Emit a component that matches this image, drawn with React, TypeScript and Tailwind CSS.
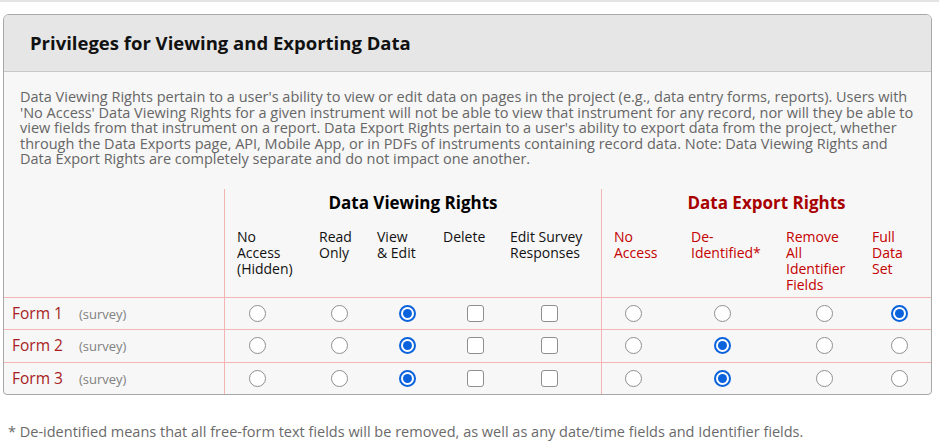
import React from "react";

type Col = { w: string; lab: string; pad: string; kind: "radio" | "box"; red?: boolean; first?: boolean; label: string[] };

const cols: Col[] = [
  { w: "86px", lab: "pl-[12px]", pad: "pl-[24px]", kind: "radio", first: true, label: ["No", "Access", "(Hidden)"] },
  { w: "60px", lab: "pl-[9px]", pad: "pl-[21px]", kind: "radio", label: ["Read", "Only"] },
  { w: "68px", lab: "pl-[7px]", pad: "pl-[29px]", kind: "radio", label: ["View", "& Edit"] },
  { w: "67px", lab: "pl-[5px]", pad: "pl-[29px]", kind: "box", label: ["Delete"] },
  { w: "96px", lab: "pl-[5px]", pad: "pl-[36px]", kind: "box", label: ["Edit Survey", "Responses"] },
  { w: "79px", lab: "pl-[12px]", pad: "pl-[23px]", kind: "radio", red: true, first: true, label: ["No", "Access"] },
  { w: "98px", lab: "pl-[11px]", pad: "pl-[34px]", kind: "radio", red: true, label: ["De-", "Identified*"] },
  { w: "84px", lab: "pl-[8px]", pad: "pl-[38px]", kind: "radio", red: true, label: ["Remove", "All", "Identifier", "Fields"] },
  { w: "69px", lab: "pl-[10px]", pad: "pl-[29px]", kind: "radio", red: true, label: ["Full", "Data", "Set"] },
];

const rows = [
  { name: "Form 1", h: "h-[32px]", view: 2, exp: 8 },
  { name: "Form 2", h: "h-[33px]", view: 2, exp: 6 },
  { name: "Form 3", h: "h-[32px]", view: 2, exp: 6 },
];

const grid = "grid grid-cols-[220px_86px_60px_68px_67px_96px_79px_98px_84px_69px]";

const Radio = ({ on }: { on: boolean }) =>
  on ? (
    <span className="flex h-[17px] w-[17px] items-center justify-center rounded-full border-2 border-[#0a63dc] bg-white">
      <span className="h-[9px] w-[9px] rounded-full bg-[#0a63dc]" />
    </span>
  ) : (
    <span className="block h-[17px] w-[17px] rounded-full border border-[#8f8f8f] bg-white" />
  );

const Box = () => <span className="block h-[17px] w-[17px] rounded-[3px] border border-[#8f8f8f] bg-white" />;

export default function App() {
  return (
    <div className="h-[445px] w-[939px] overflow-hidden border-t-2 border-[#e4e4e4] bg-white font-['Open_Sans',sans-serif]">
      <div className="ml-[3px] mt-[12px] w-[929px] overflow-hidden rounded-t-[6px] rounded-b-[4px] border border-[#a8a8a8] bg-[#f7f7f7]">
        <div className="flex h-[57px] items-center border-b border-[#c8c8c8] bg-[#e6e6e6] pl-[26px]">
          <h2 className="text-[18.5px] font-bold text-[#111]">Privileges for Viewing and Exporting Data</h2>
        </div>

        <p className="whitespace-nowrap px-[16px] pt-[17px] text-[14.5px] leading-[15.6px] text-[#666]">
          Data Viewing Rights pertain to a user's ability to view or edit data on pages in the project (e.g., data entry forms, reports). Users with<br />
          'No Access' Data Viewing Rights for a given instrument will not be able to view that instrument for any record, nor will they be able to<br />
          view fields from that instrument on a report. Data Export Rights pertain to a user's ability to export data from the project, whether<br />
          through the Data Exports page, API, Mobile App, or in PDFs of instruments containing record data. Note: Data Viewing Rights and<br />
          Data Export Rights are completely separate and do not impact one another.
        </p>

        <div className={`${grid} mt-[22px]`}>
          <div className="row-span-2" />
          <div className="col-span-5 flex h-[28px] items-center justify-center border-l border-[#f5b4b4] text-[17px] font-bold text-black">
            Data Viewing Rights
          </div>
          <div className="col-span-4 flex h-[28px] items-center justify-center border-l border-[#f5b4b4] text-[17px] font-bold text-[#a80000]">
            Data Export Rights
          </div>
          {cols.map((c, i) => (
            <div
              key={i}
              className={`${c.lab} whitespace-nowrap pb-[4px] pt-[12px] text-[14px] leading-[16px] ${c.red ? "text-[#c40000]" : "text-[#111]"} ${c.first ? "border-l border-[#f5b4b4]" : ""}`}
            >
              {c.label.map((l, j) => (
                <div key={j}>{l}</div>
              ))}
            </div>
          ))}
        </div>

        {rows.map((r) => (
          <div key={r.name} className={`${grid} ${r.h} border-t border-[#f5b4b4]`}>
            <div className="flex items-baseline self-center pl-[8px]">
              <span className="text-[15.5px] text-[#a61c1c]">{r.name}</span>
              <span className="ml-[16px] text-[13px] text-[#808080]">(survey)</span>
            </div>
            {cols.map((c, i) => (
              <div key={i} className={`flex items-center ${c.pad} ${c.first ? "border-l border-[#f5b4b4]" : ""}`}>
                {c.kind === "box" ? <Box /> : <Radio on={i === r.view || i === r.exp} />}
              </div>
            ))}
          </div>
        ))}
      </div>

      <p className="ml-[8px] mt-[26px] text-[14.5px] text-[#6a6a6a]">
        * De-identified means that all free-form text fields will be removed, as well as any date/time fields and Identifier fields.
      </p>
    </div>
  );
}
